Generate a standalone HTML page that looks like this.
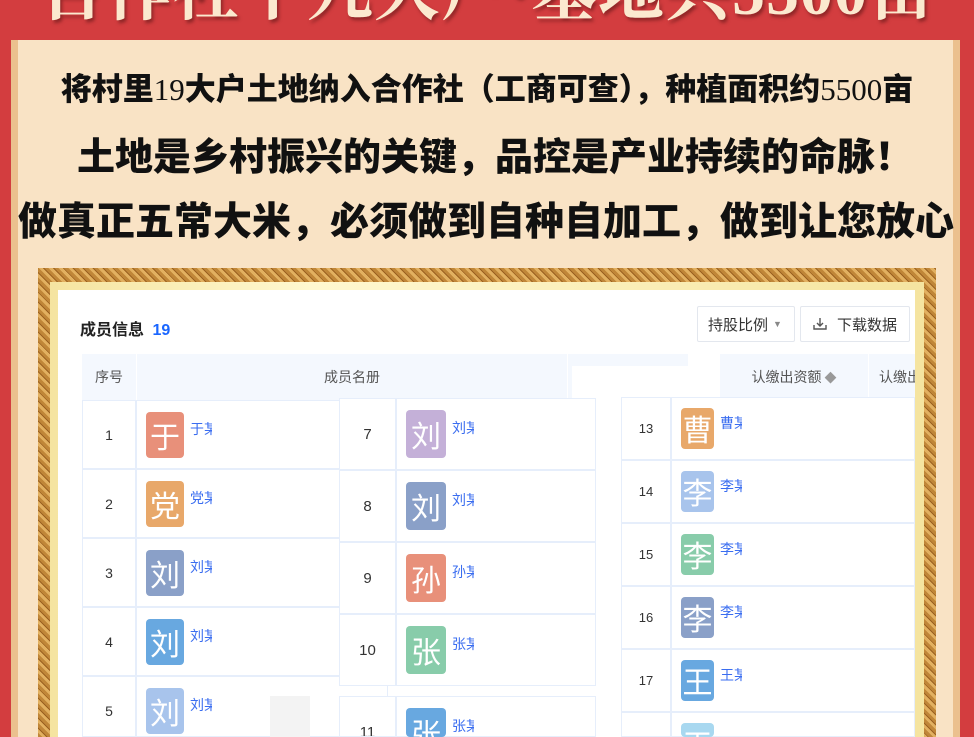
<!DOCTYPE html>
<html style="width:974px;height:737px;overflow:hidden"><head><meta charset="utf-8"><style>
*{margin:0;padding:0;box-sizing:border-box}
html,body{width:974px;height:737px;overflow:hidden}
body{background:#d33d3f;font-family:"Liberation Sans","Noto Sans CJK SC",sans-serif}
#w{position:relative;width:974px;height:737px;overflow:hidden}
.abs{position:absolute}
.title{left:0;width:974px;top:-62px;text-align:center;font-family:"Liberation Serif","Noto Serif CJK SC",serif;font-weight:bold;font-size:66px;color:#fbe9cf;text-shadow:2px 3px 3px rgba(90,20,20,.55);white-space:nowrap;letter-spacing:1px}
.panel{left:11px;top:40px;width:949px;height:697px;background:#f9e3c5;border-left:7px solid #ebc08e;border-right:7px solid #ebc08e}
.line{left:0;width:974px;text-align:center;color:#111;font-weight:900;font-family:"Noto Sans CJK SC",sans-serif;white-space:nowrap}
.frame{left:38px;top:268px;width:898px;height:469px;background:repeating-linear-gradient(45deg,#c08638 0 3px,#e2b060 3px 6px,#9a6020 6px 7px);}
.frame2{left:50px;top:282px;width:874px;height:455px;background:linear-gradient(90deg,#f5e4a0,#fff8d0 30%,#f5e4a0);}
.white{left:58px;top:290px;width:857px;height:447px;background:#fff}
.cell{position:absolute;border:1px solid #e6eefb;background:#fff;color:#333;font-size:14px;display:flex;align-items:center;justify-content:center;overflow:hidden}
.av{position:absolute;border-radius:4px;color:#fff;font-size:30px;display:flex;align-items:flex-start;justify-content:center;font-family:"Noto Sans CJK SC",sans-serif;overflow:hidden}
.nm{position:absolute;color:#3a6df0;font-size:14px;overflow:hidden;white-space:nowrap}
.btn{position:absolute;border:1px solid #e3e7ee;border-radius:2px;font-size:15px;color:#333;display:flex;align-items:center;background:#fff}
.hd{position:absolute;background:#f4f8fe;color:#555;font-size:14px;display:flex;align-items:center;justify-content:center}
</style></head><body><div id="w">
<div class="abs title">合作社十九大户·基地共5500亩</div>
<div class="abs panel"></div>
<div class="abs line" style="top:64px;font-size:31px">将村里<span style="font-family:'Liberation Serif',serif;font-weight:normal">19</span>大户土地纳入合作社（工商可查），种植面积约<span style="font-family:'Liberation Serif',serif;font-weight:normal">5500</span>亩</div>
<div class="abs line" style="top:126px;font-size:38px;left:8px">土地是乡村振兴的关键，品控是产业持续的命脉！</div>
<div class="abs line" style="top:191px;font-size:39px;left:-1px">做真正五常大米，必须做到自种自加工，做到让您放心</div>
<div class="abs frame"></div>
<div class="abs frame2"></div>
<div class="abs white"></div>
<div class="abs" style="left:80px;top:316px;font-size:16px;font-weight:bold;color:#222">成员信息 <span style="color:#1a66ff;margin-left:4px">19</span></div>
<div class="btn" style="left:697px;top:306px;width:98px;height:36px;padding-left:10px">持股比例 <span style="font-size:9px;color:#888;margin-left:5px">▼</span></div>
<div class="btn" style="left:800px;top:306px;width:110px;height:36px;padding-left:10px">
<svg width="18" height="16" viewBox="0 0 18 16"><path d="M9 2v8M6 7l3 3 3-3M3 9v4h12V9" fill="none" stroke="#555" stroke-width="1.4"/></svg><span style="margin-left:8px">下载数据</span></div>
<div class="hd" style="left:82px;top:354px;width:54px;height:46px">序号</div>
<div class="hd" style="left:137px;top:354px;width:430px;height:46px">成员名册</div>
<div class="hd" style="left:568px;top:354px;width:120px;height:46px"></div>
<div class="abs" style="left:572px;top:366px;width:148px;height:34px;background:#fff"></div>
<div class="hd" style="left:720px;top:354px;width:148px;height:46px">认缴出资额 <span style="color:#999;font-size:12px;margin-left:3px">◆</span></div>
<div class="hd" style="left:869px;top:354px;width:46px;height:46px;justify-content:flex-start;padding-left:10px;overflow:hidden;white-space:nowrap">认缴出</div>
<div id="t"></div>
<script>
var t=document.getElementById('t'),h='',B=737;
function tbl(x,y,w1,w2,rh,rows,av,fs){rows.forEach(function(r,i){var yy=y+i*rh;if(yy>=B)return;var ch=Math.min(rh,B-yy);
h+='<div class="cell" style="left:'+x+'px;top:'+yy+'px;width:'+w1+'px;height:'+ch+'px;font-size:'+fs+'px;align-items:flex-start;padding-top:'+(rh/2-9)+'px">'+r[0]+'</div>';
h+='<div class="cell" style="left:'+(x+w1)+'px;top:'+yy+'px;width:'+w2+'px;height:'+ch+'px"></div>';
var at=yy+(rh-av)/2,ah=Math.min(av,B-at);
if(ah>0)h+='<div class="av" style="left:'+(x+w1+10)+'px;top:'+at+'px;width:'+(av-8)+'px;height:'+ah+'px;line-height:'+av+'px;background:'+r[2]+'">'+r[1]+'</div>';
var nt=yy+rh/2-16;if(nt+20<=B)h+='<div class="nm" style="left:'+(x+w1+av+8)+'px;top:'+nt+'px;width:22px;height:20px">'+r[1]+'某</div>';});}
tbl(82,400,54,252,69,[[1,'于','#e8907a'],[2,'党','#e8a86a'],[3,'刘','#8aa0c8'],[4,'刘','#68a8e0'],[5,'刘','#a8c4ec']],46,14);
tbl(339,398,57,200,72,[[7,'刘','#c4b0d8'],[8,'刘','#8aa0c8'],[9,'孙','#e8907a'],[10,'张','#88ccaa']],48,15);
tbl(339,696,57,200,72,[[11,'张','#68a8e0']],48,15);
tbl(621,397,50,244,63,[[13,'曹','#e8a86a'],[14,'李','#a8c4ec'],[15,'李','#88ccaa'],[16,'李','#8aa0c8'],[17,'王','#68a8e0'],[18,'王','#a8d8f0']],41,13);
h+='<div class="abs" style="left:270px;top:696px;width:40px;height:41px;background:#f3f3f3"></div>';
t.innerHTML=h;
</script>
</div></body></html>
